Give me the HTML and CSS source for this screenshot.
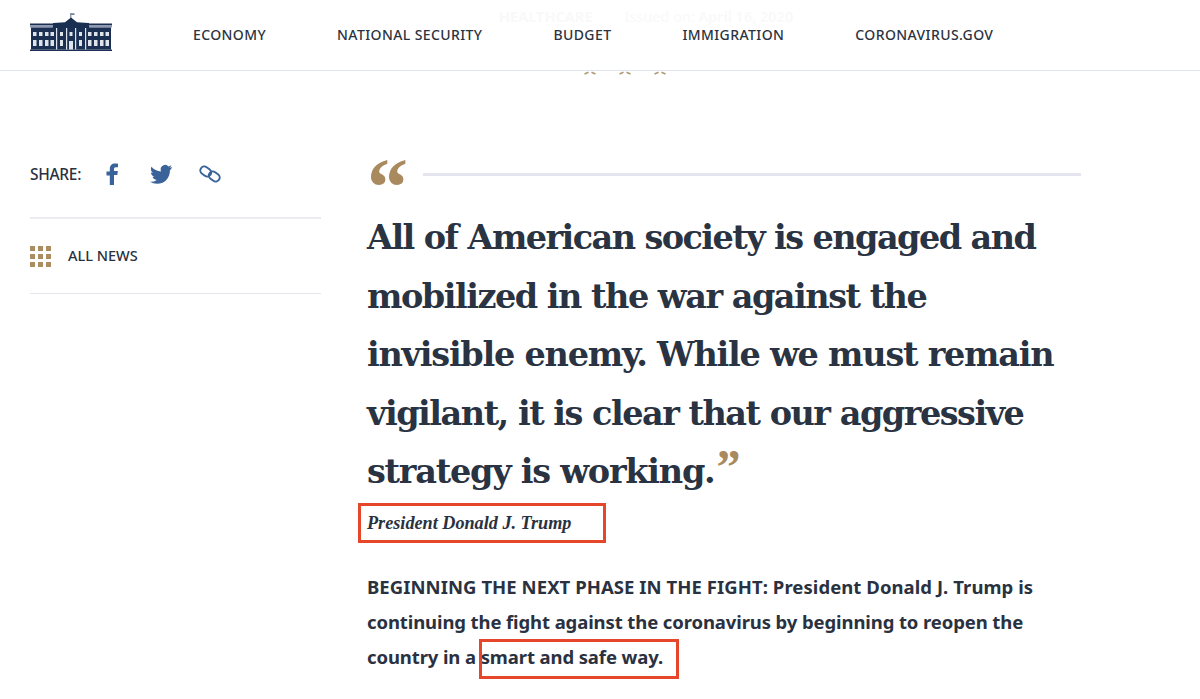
FILE: index.html
```html
<!DOCTYPE html>
<html lang="en">
<head>
<meta charset="utf-8">
<title>President Donald J. Trump</title>
<link rel="stylesheet" href="styles.css">
</head>
<body>
<div class="ghost"><span class="ghost-cat">HEALTHCARE</span><span class="ghost-date">Issued on: <b>April 16, 2020</b></span></div>
<header class="topbar">
  <svg class="logo" viewBox="0 -2 82 40" width="82" height="40" aria-hidden="true">
    <rect x="40.500" y="-2" width="0.7" height="5" fill="#1b2f52"/>
    <rect x="41" y="-1.800" width="3.500" height="1.800" fill="#7b869c"/>
    <path d="M22.500 13 L23.500 8 L35 7.300 L41 2.500 L47 7.300 L58.500 8 L59.500 13 Z" fill="#1b2f52"/>
    <rect x="0" y="8.500" width="82" height="1.500" fill="#1b2f52"/>
    <rect x="0" y="10" width="82" height="2.500" fill="#8f9ab0"/>
    <rect x="23" y="8" width="36" height="5" fill="#1b2f52"/>
    <rect x="1" y="12.500" width="80" height="22" fill="#1b2f52"/>
    <rect x="0" y="34.500" width="82" height="1.500" fill="#1b2f52"/>
    <g fill="#dfe3ea">
      <path d="M3 17h3.500v4h-3.500zM9 17h3.500v4h-3.500zM15 17h3.500v4h-3.500zM20.500 17h3.500v4h-3.500zM58 17h3.500v4h-3.500zM64 17h3.500v4h-3.500zM70 17h3.500v4h-3.500zM75.500 17h3.500v4h-3.500z"/>
      <path d="M3 25h3.500v6h-3.500zM9 25h3.500v6h-3.500zM15 25h3.500v6h-3.500zM20.500 25h3.500v6h-3.500zM58 25h3.500v6h-3.500zM64 25h3.500v6h-3.500zM70 25h3.500v6h-3.500zM75.500 25h3.500v6h-3.500z"/>
      <path d="M30 17h3v4h-3zM49 17h3v4h-3zM30 25h3v6h-3zM49 25h3v6h-3zM39.500 17h3v4h-3z"/>
      <path d="M26 13h1.200v21.500h-1.200zM36 13h1.200v21.500h-1.200zM45 13h1.200v21.500h-1.200zM55 13h1.200v21.500h-1.200z"/>
      <path d="M39 26h4v8.500h-4z"/>
    </g>
  </svg>
  <nav class="nav">
    <a>ECONOMY</a><a>NATIONAL SECURITY</a><a>BUDGET</a><a>IMMIGRATION</a><a>CORONAVIRUS.GOV</a>
  </nav>
</header>
<div class="stars">
  <svg viewBox="0 0 12 4" width="12" height="4" aria-hidden="true"><path d="M.5 3 L4.500 1.200 M11.500 3 L7.500 1.200" fill="none" stroke="#b39a76" stroke-width="1.700"/></svg>
  <svg viewBox="0 0 12 4" width="12" height="4" aria-hidden="true"><path d="M.5 3 L4.500 1.200 M11.500 3 L7.500 1.200" fill="none" stroke="#b39a76" stroke-width="1.700"/></svg>
  <svg viewBox="0 0 12 4" width="12" height="4" aria-hidden="true"><path d="M.5 3 L4.500 1.200 M11.500 3 L7.500 1.200" fill="none" stroke="#b39a76" stroke-width="1.700"/></svg>
</div>
<main class="page">
  <aside class="side">
    <div class="share">
      <span class="share-label">SHARE:</span>
      <svg class="ico" viewBox="0 0 24 24" width="24" height="24" aria-hidden="true"><path fill="#3a6399" d="M9.800 23V13.400H6.500V9.500h3.300V6.900C9.800 3.400 11.800 1.500 15 1.500c1.400 0 2.700.1 3 .2v3.500h-2c-1.700 0-2 .8-2 2v1.800h3.800l-.5 3.900H14V23z"/></svg>
      <svg class="ico" viewBox="0 0 24 24" width="24" height="24" aria-hidden="true"><path fill="#3a6399" d="M23 5.100c-.8.4-1.700.6-2.600.7.900-.6 1.700-1.400 2-2.500-.9.500-1.900.9-2.900 1.100A4.500 4.500 0 0 0 11.800 8.500c0 .4 0 .7.100 1C8.200 9.300 4.800 7.500 2.500 4.700c-.4.700-.6 1.500-.6 2.300 0 1.600.8 3 2 3.800-.7 0-1.400-.2-2-.6v.1c0 2.200 1.600 4 3.600 4.400-.7.200-1.400.2-2 .1.600 1.800 2.200 3.100 4.200 3.100A9 9 0 0 1 1 19.800 12.800 12.800 0 0 0 8 21.800c8.300 0 12.900-6.900 12.900-12.900v-.6c.9-.6 1.600-1.400 2.100-3.200z"/></svg>
      <svg class="ico" viewBox="0 0 24 24" width="24" height="24" aria-hidden="true"><g fill="none" stroke="#3a6399" stroke-width="2"><rect x="2" y="5.500" width="11.500" height="8" rx="4" transform="rotate(35 7.750 9.500)"/><rect x="10.500" y="10.500" width="11.500" height="8" rx="4" transform="rotate(35 16.250 14.500)"/></g></svg>
    </div>
    <div class="allnews">
      <span class="grid-ico"><i></i><i></i><i></i><i></i><i></i><i></i><i></i><i></i><i></i></span>
      <span class="allnews-label">ALL NEWS</span>
    </div>
  </aside>
  <article class="article">
    <div class="quote-head"><span class="qmark">“</span><span class="rule"></span></div>
    <h1 class="quote"><span class="line-tight">All of American society is engaged and</span><br>mobilized in the war against the<br><span class="line-wide">invisible enemy. While we must remain</span><br>vigilant, it is clear that our aggressive<br><span class="line-wide">strategy is working.</span><span class="qclose">”</span></h1>
    <p class="attrib">President Donald J. Trump</p>
    <p class="lede"><span class="lede-caps">BEGINNING THE NEXT PHASE IN THE FIGHT: President Donald J. Trump is</span><br>continuing the fight against the coronavirus by beginning to reopen the<br>country in a smart and safe way.</p>
    <span class="mark mark-name"></span>
    <span class="mark mark-way"></span>
  </article>
</main>
</body>
</html>
```
FILE: styles.css
```css
html, body { margin: 0; padding: 0; background: #fff; }
body { width: 1200px; height: 699px; overflow: hidden; position: relative; color: #2a3140; font-family: "Noto Sans", sans-serif; }
.ghost { position: absolute; left: 499px; top: 7px; font-size: 14.500px; line-height: 18px; color: #f9f9f9; white-space: nowrap; display: flex; gap: 32px; }
.ghost-cat { font-weight: 700; }
.ghost b { font-weight: 600; }
.topbar { height: 70px; border-bottom: 1px solid #dfe3ec; display: flex; align-items: center; padding-left: 30px; position: relative; box-sizing: content-box; }
.logo { flex: none; margin-top: -5px; }
.nav { display: flex; gap: 71px; margin-left: 81px; font-size: 14px; letter-spacing: .4px; font-weight: 500; color: #2c3340; margin-top: -2px; }
.stars { position: absolute; left: 584px; top: 71px; display: flex; gap: 23px; }
.page { display: grid; grid-template-columns: 291px 714px; column-gap: 46px; padding: 87px 0 0 30px; }
.share { display: flex; align-items: center; padding-bottom: 28px; box-sizing: border-box; height: 61px; border-bottom: 2px solid #eaecf0; }
.share-label { font-size: 15.500px; font-weight: 500; width: 70px; letter-spacing: -.3px; }
.ico { margin-right: 25px; flex: none; }
.allnews { display: flex; align-items: center; height: 75px; padding-bottom: 3px; box-sizing: border-box; border-bottom: 1px solid #e3e6ea; }
.allnews-label { font-size: 14.500px; font-weight: 500; margin-left: 17px; }
.grid-ico { display: grid; grid-template-columns: repeat(3, 5px); grid-auto-rows: 5px; gap: 3px; margin-top: 4px; }
.grid-ico i { background: #aa8d61; }
.article { position: relative; }
.quote-head { display: flex; align-items: center; height: 34px; margin-top: -1px; margin-bottom: 1px; }
.qmark { font-family: "Liberation Serif", serif; font-weight: 700; font-size: 82px; line-height: 30px; height: 34px; color: #a98a5f; width: 56px; padding-top: 16px; box-sizing: border-box; flex: none; }
.rule { width: 658px; height: 3px; background: #e4e5ee; }
.quote { margin: 18px 0 0; font-family: "DejaVu Serif", serif; font-weight: 700; font-size: 33.500px; line-height: 58.500px; color: #2a3342; letter-spacing: -1.500px; white-space: nowrap; }
.line-wide { letter-spacing: -1.250px; }
.line-tight { letter-spacing: -1.580px; }
.qclose { font-family: "Liberation Serif", serif; color: #a98a5f; font-size: 48px; line-height: 0; letter-spacing: 0; margin-left: 2px; }
.attrib { margin: 9px 0 0; font-family: "Liberation Serif", serif; font-weight: 700; font-style: italic; font-size: 18.200px; line-height: 24px; }
.lede { margin: 34px 0 0; font-size: 18.500px; line-height: 35px; font-weight: 700; letter-spacing: -.11px; white-space: nowrap; }
.lede-caps { letter-spacing: .06px; }
.mark { position: absolute; border: 3px solid #e6472b; box-sizing: border-box; }
.mark-name { left: -9px; top: 345px; width: 248px; height: 40px; }
.mark-way { left: 112px; top: 481px; width: 200px; height: 40px; }
```
